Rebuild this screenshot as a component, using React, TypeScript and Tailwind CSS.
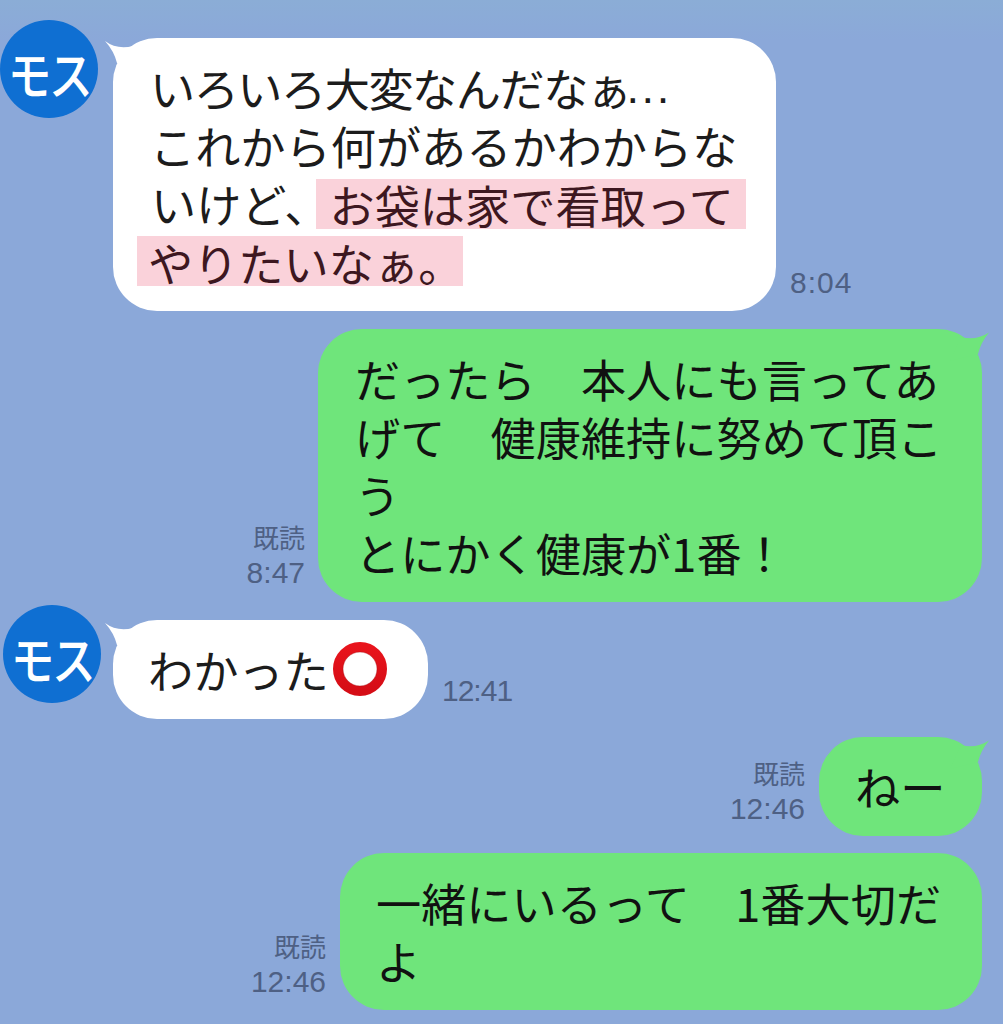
import React from "react";

const font = { fontFamily: '"Noto Sans CJK JP", "Noto Sans CJK SC", sans-serif' };

function TailLeft() {
  return (
    <svg className="absolute left-[-9px] top-[2px]" width="50" height="40" viewBox="0 0 50 40">
      <path d="M1 1 Q13 10 29 6 L40 30 L13 23 Q10 11 1 1Z" fill="#ffffff" />
    </svg>
  );
}

function TailRight() {
  return (
    <svg className="absolute right-[-8px] top-[2px]" width="50" height="40" viewBox="0 0 50 40">
      <path d="M49 1.5 Q36 10 21 6 L10 30 L38 23 Q41 11 49 1.5Z" fill="#6fe57b" />
    </svg>
  );
}

function Avatar({ className }: { className: string }) {
  return (
    <div className={"relative z-10 flex h-[98px] w-[98px] shrink-0 items-center justify-center overflow-hidden rounded-full bg-[#0f6fd2] " + className}>
      <span className="mt-[8px] scale-x-[0.84] text-[52px] leading-none font-medium tracking-[-3px] whitespace-nowrap text-white" style={font}>モス</span>
    </div>
  );
}

function Stamp({ read, time, className }: { read?: boolean; time: string; className?: string }) {
  return (
    <div className={"flex shrink-0 flex-col items-end text-[#4e6084] " + (className ?? "")}>
      {read && <span className="mb-[5px] text-[26px] leading-[30px]" style={font}>既読</span>}
      <span className="font-['Liberation_Sans'] text-[30px] leading-[32px]">{time}</span>
    </div>
  );
}

function Green({ children, className }: { children: React.ReactNode; className: string }) {
  return (
    <div className={"relative rounded-[44px] bg-[#6fe57b] py-[20.5px] text-[45.2px] leading-[58px] whitespace-nowrap text-[#111111] " + className} style={font}>
      <TailRight />
      <div className="relative">{children}</div>
    </div>
  );
}

export default function App() {
  return (
    <div className="flex h-[1024px] w-[1003px] flex-col gap-[18px] overflow-hidden bg-[linear-gradient(180deg,#8badd6_0px,#8ba8d9_40px,#8ba8d9_100%)] pt-[38px]">
      {/* Row 1 */}
      <div className="flex items-end">
        <div className="flex items-start self-start">
          <Avatar className="mt-[-18px]" />
          <div className="relative ml-[15px] w-[663px] rounded-[44px] bg-white py-[20.5px] text-[45.2px] leading-[58px] whitespace-nowrap text-[#1c1c1c]" style={font}>
            <TailLeft />
            <div className="relative flex pl-[37px]">
              <span className="tracking-[-1.5px]">いろいろ大変なんだなぁ</span>
              <span className="ml-[-4px] font-['Liberation_Sans'] tracking-[2.5px]">...</span>
            </div>
            <div className="relative pl-[37px]">これから何があるかわからな</div>
            <div className="relative pl-[38px]">
              いけど、
              <span className="mt-[4px] ml-[-14px] inline-block h-[50px] bg-[#fad2da] pr-[12px] pl-[14px] align-top leading-[52px] text-[#3d1720]">お袋は家で看取って</span>
            </div>
            <div className="relative pl-[24px]">
              <span className="mt-[3px] inline-block h-[50px] w-[326px] bg-[#fad2da] pl-[11px] align-top leading-[54px] text-[#3d1720]">やりたいなぁ。</span>
            </div>
          </div>
        </div>
        <Stamp time="8:04" className="mb-[12px] ml-[14px] tracking-[1px]" />
      </div>

      {/* Row 2 */}
      <div className="flex items-end justify-end pr-[21px]">
        <Stamp read time="8:47" className="mb-[13px] mr-[13px]" />
        <Green className="w-[664px] pl-[37px]">
          <div>だったら　本人にも言ってあ</div>
          <div>げて　健康維持に努めて頂こ</div>
          <div>う</div>
          <div>とにかく健康が1番！</div>
        </Green>
      </div>

      {/* Row 3 */}
      <div className="flex items-end">
        <div className="flex items-start">
          <Avatar className="ml-[3px] mt-[-15px]" />
          <div className="relative ml-[12px] flex h-[99px] w-[315px] items-center rounded-[44px] bg-white pl-[35px] text-[45.2px] leading-[58px] whitespace-nowrap text-[#1c1c1c]" style={font}>
            <TailLeft />
            <span className="relative">わかった</span>
            <svg className="relative mt-[-2px] ml-[3px] shrink-0" width="56" height="56" viewBox="0 0 56 56">
              <defs>
                <linearGradient id="ring" x1="0" y1="0" x2="0" y2="1">
                  <stop offset="0" stopColor="#e8141c" />
                  <stop offset="1" stopColor="#d50d16" />
                </linearGradient>
              </defs>
              <circle cx="28" cy="28" r="22" fill="none" stroke="url(#ring)" strokeWidth="10" />
              <circle cx="28" cy="28" r="17" fill="none" stroke="#a80d15" strokeWidth="1" opacity="0.45" />
            </svg>
          </div>
        </div>
        <Stamp time="12:41" className="mb-[12px] ml-[14px] tracking-[-1px]" />
      </div>

      {/* Row 4 */}
      <div className="flex items-end justify-end pr-[21px]">
        <Stamp read time="12:46" className="mb-[11px] mr-[14px]" />
        <Green className="flex h-[99px] w-[163px] items-center pl-[36px]">
          <div>ねー</div>
        </Green>
      </div>

      {/* Row 5 */}
      <div className="mt-[-1px] flex items-end justify-end pr-[21px]">
        <Stamp read time="12:46" className="mb-[12px] mr-[14px]" />
        <div className="relative w-[642px] rounded-[44px] bg-[#6fe57b] py-[20.5px] pl-[36px] text-[45.2px] leading-[58px] whitespace-nowrap text-[#111111]" style={font}>
          <div>一緒にいるって　1番大切だ</div>
          <div>よ</div>
        </div>
      </div>
    </div>
  );
}
